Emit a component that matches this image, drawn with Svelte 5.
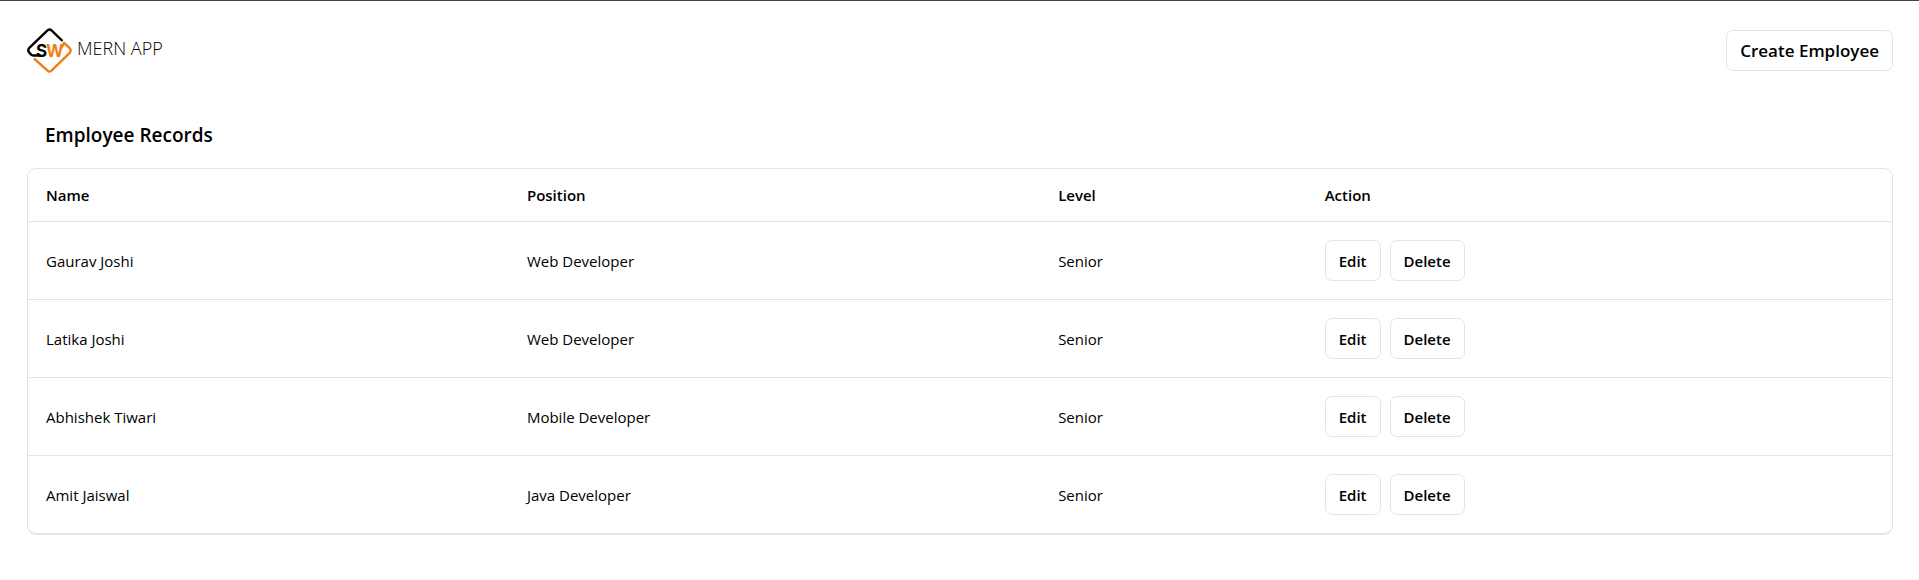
<script>
  const employees = [
    { name: 'Gaurav Joshi', position: 'Web Developer', level: 'Senior' },
    { name: 'Latika Joshi', position: 'Web Developer', level: 'Senior' },
    { name: 'Abhishek Tiwari', position: 'Mobile Developer', level: 'Senior' },
    { name: 'Amit Jaiswal', position: 'Java Developer', level: 'Senior' }
  ];
</script>

<div class="page">
  <header>
    <a class="brand" href="#home">
      <svg class="logo" viewBox="0 0 45 45" aria-hidden="true">
        <g fill="none" stroke-width="2.4" stroke-linejoin="round">
          <path stroke="#000" d="M35.5 13 L24.5 2.4 Q22.5 .6 20.5 2.4 L2.3 19.8 Q.2 22.3 2.3 24.6 L4.2 26.6 Q5.3 27.5 7 27.5 H14" />
          <path stroke="#ef7f1a" d="M7 30.5 L20.5 42.6 Q22.5 44.4 24.5 42.6 L42.7 24.8 Q44.6 22.4 42.7 20.2 L37 14.8 L34.5 20" />
        </g>
        <text x="9" y="28.5" font-size="17" fill="#000">S</text>
        <text x="19" y="28.5" font-size="17" fill="#ef7f1a">W</text>
      </svg>
      <span>MERN APP</span>
    </a>
    <a class="button large" href="#create">Create Employee</a>
  </header>

  <main>
    <h1>Employee Records</h1>
    <div class="card">
      <table>
        <thead>
          <tr>
            <th class="name">Name</th>
            <th class="position">Position</th>
            <th class="level">Level</th>
            <th>Action</th>
          </tr>
        </thead>
        <tbody>
          {#each employees as employee}
            <tr>
              <td>{employee.name}</td>
              <td>{employee.position}</td>
              <td>{employee.level}</td>
              <td>
                <div class="actions">
                  <a class="button" href="#edit">Edit</a>
                  <button class="button" type="button">Delete</button>
                </div>
              </td>
            </tr>
          {/each}
        </tbody>
      </table>
    </div>
  </main>
</div>

<style>
  :global(body) {
    background: #fff;
  }
  .page {
    box-sizing: border-box;
    padding: 27px 26px 27px 27px;
    border-top: 1px solid #444;
    font-family: 'Open Sans', sans-serif;
    font-size: 15px;
    line-height: 22px;
    color: #000;
  }
  header {
    display: flex;
    justify-content: space-between;
    align-items: center;
    margin-bottom: 46px;
  }
  .brand {
    display: flex;
    gap: 5px;
    color: #000;
    font-size: 18px;
    font-weight: 300;
    line-height: 40px;
    text-decoration: none;
  }
  .logo {
    width: 45px;
    height: 45px;
  }
  .logo text {
    font-family: Inter, sans-serif;
    font-weight: 700;
  }
  h1 {
    margin: 0;
    padding: 0 18px 16px;
    font-size: 19px;
    line-height: 33px;
    font-weight: 600;
  }
  .card {
    overflow: hidden;
    border: 1px solid #e4e4e8;
    border-bottom-width: 2px;
    border-radius: 9px;
  }
  table {
    width: 100%;
    table-layout: fixed;
    border-spacing: 0;
  }
  th,
  td {
    box-sizing: border-box;
    padding: 18px;
    text-align: left;
    vertical-align: middle;
    border-bottom: 1px solid #e4e4e8;
  }
  th {
    height: 53px;
    padding: 0 18px;
    font-weight: 600;
  }
  tbody tr:last-child td {
    border-bottom: 0;
  }
  .name {
    width: 25.8%;
  }
  .position {
    width: 28.5%;
  }
  .level {
    width: 14.3%;
  }
  .actions {
    display: flex;
    gap: 9px;
  }
  .button {
    box-sizing: border-box;
    display: inline-flex;
    align-items: center;
    justify-content: center;
    height: 41px;
    padding: 0 13px;
    border: 1px solid #e4e4e8;
    border-radius: 7px;
    background: #fff;
    color: #000;
    font: inherit;
    font-weight: 600;
    text-decoration: none;
    cursor: pointer;
  }
  .large {
    font-size: 17px;
  }
</style>
